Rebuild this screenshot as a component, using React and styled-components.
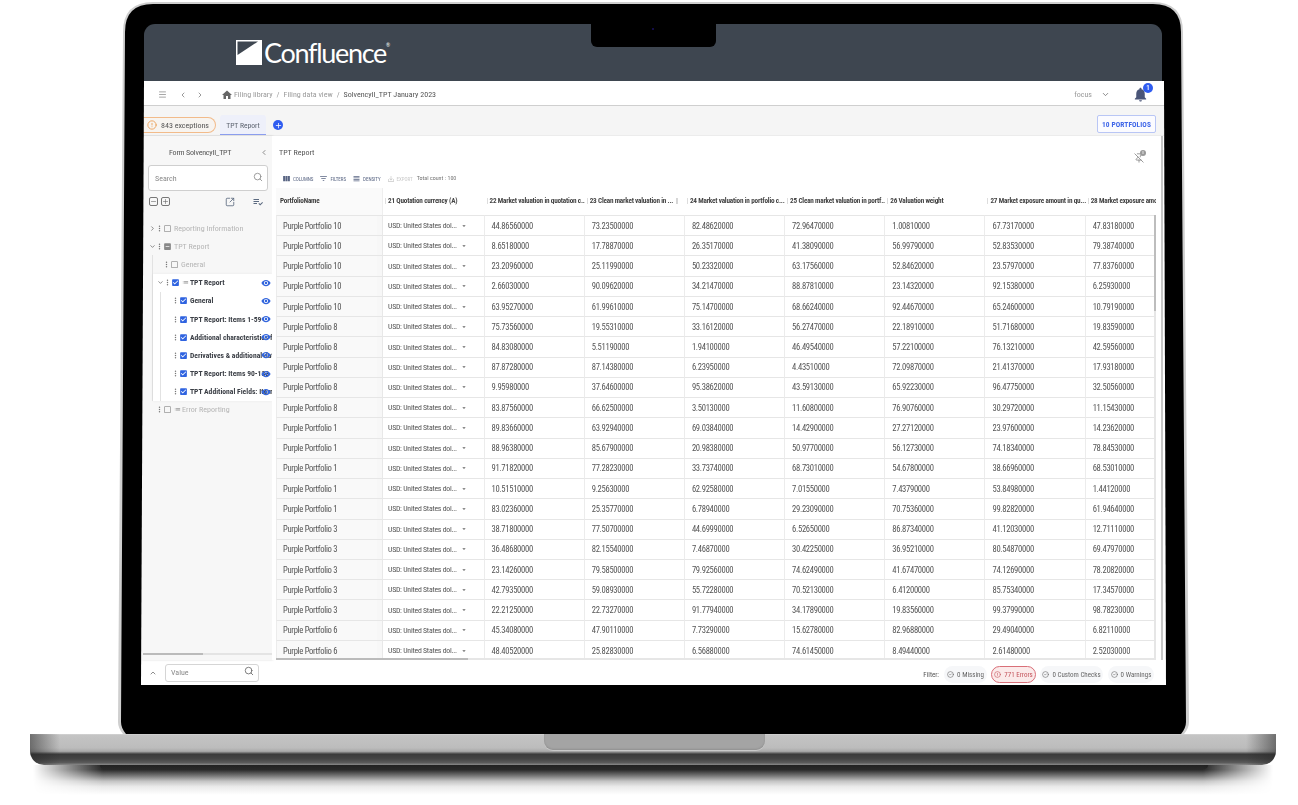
import React from "react";
import styled, { createGlobalStyle } from "styled-components";
import { ChevronLeft, ChevronRight, ChevronDown, ChevronUp, Menu, Search, SquareArrowOutUpRight, PinOff, CircleAlert, CircleCheck, Plus, Minus } from "lucide-react";
import { MdHome, MdNotifications, MdViewColumn, MdFilterList, MdViewHeadline, MdSaveAlt, MdVisibility, MdMoreVert, MdCheckBox, MdCheckBoxOutlineBlank, MdIndeterminateCheckBox, MdList, MdArrowDropDown, MdPlaylistAddCheck, MdAdd } from "react-icons/md";

const Global = createGlobalStyle`
  html, body { margin: 0; padding: 0; background: #fff; }
  body { font-family: Roboto, "Liberation Sans", sans-serif; overflow: hidden; }
  * { box-sizing: border-box; }
`;

const Stage = styled.div`
  width: 1298px; height: 805px; padding-top: 2px; background: #fff; overflow: hidden;
`;
const Lid = styled.div`
  position: relative; width: 1071px; height: 732px; margin-left: 118px; padding-top: 22px;
`;
const LidArt = styled.svg`
  position: absolute; inset: 0; width: 100%; height: 100%;
`;
const Header = styled.header`
  position: relative; height: 57px; margin-left: 26px; width: 1018px; padding-left: 92px;
  display: flex; align-items: center; gap: 2px;
  background: #3e4650; border-radius: 11px 11px 0 0;
`;
const Notch = styled.div`
  position: absolute; left: 447px; top: 0; width: 125px; height: 23px;
  background: #000; border-radius: 0 0 6px 6px;
`;
const Camera = styled.span`
  position: absolute; left: 61px; top: 4px; width: 2px; height: 2px; border-radius: 50%; background: #1a1060;
`;
const Brand = styled.span`
  font-family: Lato, "Open Sans", sans-serif; font-weight: 400; font-size: 27px; letter-spacing: -1.3px;
  line-height: 1; color: #fff;
`;
const BrandMark = styled.sup`
  font-size: 5px; vertical-align: 16px; line-height: 0; letter-spacing: 0;
`;
const AppFrame = styled.div`
  position: relative; margin-left: 23px; width: 1025px; height: 604px; background: #fff;
  display: flex; flex-direction: column;
  font-family: "Roboto Condensed", Roboto, sans-serif; font-stretch: 75%;
  clip-path: polygon(3px 0, 1023px 0, 100% 100%, 0 100%);
  filter: blur(0.3px);
`;
const TopBar = styled.div`
  height: 25px; flex: none; display: flex; align-items: center; padding: 3px 17px 0 16px;
  border-bottom: 1px solid #cfcfcf; color: #8a8a8a; font-size: 8px;
`;
const IconSlot = styled.span`
  display: inline-flex; align-items: center; justify-content: center; flex: none;
  width: ${p => p.$w || 12}px; margin-left: ${p => p.$ml || 0}px;
  color: ${p => p.$c || "inherit"};
`;
const Crumb = styled.span`
  margin-left: ${p => p.$ml || 0}px; white-space: nowrap; color: ${p => p.$dark ? "#555" : "#9a9a9a"};
`;
const Spacer = styled.div` flex: 1; `;
const BellWrap = styled.span`
  position: relative; display: inline-flex; margin-left: 22px; color: #4a5578;
`;
const BellBadge = styled.span`
  position: absolute; right: -4px; top: -3px; width: 10px; height: 10px; border-radius: 50%;
  background: #2f5cf0; color: #fff; font-size: 7px; font-weight: 500; display: flex; align-items: center; justify-content: center;
`;
const SubBar = styled.div`
  height: 29px; flex: none; display: flex; align-items: flex-end; background: #f5f5f5; padding-right: 10px;
`;
const ExceptionPill = styled.div`
  height: 16px; width: 76px; margin-bottom: 2px; margin-left: -1px; display: flex; align-items: center; gap: 4px; padding-left: 7px;
  border: 1px solid #f2bb8a; border-radius: 0 8px 8px 0; border-left: none; font-size: 8px; color: #555; background: #f7f4f0;
  white-space: nowrap;
  svg { color: #ea9a4e; flex: none; }
`;
const Tab = styled.div`
  width: 46px; height: 20px; margin-left: 4px; display: flex; align-items: center; justify-content: center; padding-top: 2px;
  font-size: 7.6px; color: #5d6470; background: #eef0fa; border-bottom: 1px solid #8d9ff0; border-radius: 3px 3px 0 0;
`;
const AddDot = styled.span`
  width: 10px; height: 10px; margin: 0 0 5px 7px; border-radius: 50%; background: #2f5cf0; color: #fff;
  display: flex; align-items: center; justify-content: center;
`;
const PortfolioButton = styled.button`
  width: 59px; height: 18px; margin-bottom: 2px; padding: 0; border: 1px solid #b9c6f5; border-radius: 2px; background: #fbfbff;
  color: #3f66e8; font-family: inherit; font-stretch: 75%; font-size: 7.4px; font-weight: 700; letter-spacing: 0.1px;
`;
const Body = styled.div`
  flex: 1; min-height: 0; display: flex; border-top: 1px solid #ececec;
`;
const Sidebar = styled.aside`
  position: relative; width: 131px; flex: none; background: #f7f7f7; padding: 8px 3px 0 7px; color: #555;
  box-shadow: 1px 0 2px rgba(0,0,0,.15);
  overflow: hidden;
`;
const SideTitle = styled.div`
  display: flex; align-items: center; height: 16px; padding-left: 21px; font-size: 8px; letter-spacing: -0.2px; color: #555; white-space: nowrap;
`;
const SearchBox = styled.div`
  height: 26px; margin-top: 5px; width: 120px; border: 1px solid #cfcfcf; border-radius: 3px; background: #fff;
  display: flex; align-items: center; justify-content: space-between; padding: 0 4px 0 6px; font-size: 8px; color: #8a8a8a;
  svg { margin-top: -2px; }
`;
const SideTools = styled.div`
  height: 13px; margin-top: 4px; display: flex; align-items: center; color: #666;
`;
const BoxBtn = styled.span`
  display: inline-flex; width: 9px; height: 9px; margin-left: ${p => p.$ml || 1}px; border: 1px solid #777; border-radius: 2px; align-items: center; justify-content: center;
`;
const Tree = styled.div`
  position: relative; margin: 11px -3px 0 -7px;
`;
const LevelOne = styled.div`
  margin-left: 11px; border-left: 1px solid #e2e2e2;
`;
const TreeBand = styled.div`
  background: #fff; box-shadow: 0 0 3px rgba(0,0,0,.06);
`;
const ChildGroup = styled.div`
  margin-left: 7px; border-left: 1px solid #e2e2e2;
`;
const TreeRow = styled.div`
  position: relative; height: 18.2px; display: flex; align-items: center; padding-left: ${p => p.$pad}px;
  font-size: ${p => p.$strong ? 7.6 : 8}px; white-space: nowrap; overflow: hidden;
  font-weight: ${p => p.$strong ? 700 : 400};
  color: ${p => p.$strong ? "#3b3f46" : "#b5b5b5"};
`;
const Twist = styled.span`
  display: inline-flex; width: 8px; justify-content: center; color: #444; flex: none;
`;
const BoxOn = styled(MdCheckBox)` color: #2f63e0; flex: none; margin-right: 2px; `;
const BoxOff = styled(MdCheckBoxOutlineBlank)` color: #999; flex: none; margin-right: 2px; `;
const BoxMixed = styled(MdIndeterminateCheckBox)` color: #888; flex: none; margin-right: 2px; `;
const Dots = styled(MdMoreVert)` color: #777; flex: none; margin: 0 -1px; `;
const ListGlyph = styled(MdList)` color: #999; flex: none; margin-right: 1px; `;
const Eye = styled(MdVisibility)`
  position: absolute; left: ${p => p.$left}px; color: #3366dd;
`;
const SideScroll = styled.div`
  position: absolute; left: 2px; right: 0; bottom: 5px; height: 2px; background: #e4e4e4;
  &::before { content: ""; display: block; width: 60px; height: 2px; background: #bbb; }
`;
const Main = styled.main`
  flex: 1; min-width: 0; position: relative; padding-left: 4px; background: #fff; overflow: hidden;
  margin-right: 3px; border-right: 2px solid #c6c6c6;
`;
const MainHead = styled.div`
  height: 33px; display: flex; align-items: center; justify-content: space-between; padding: 0 17px 0 3px; font-size: 8px; color: #555;
`;
const PinWrap = styled.span`
  position: relative; display: inline-flex; color: #888; margin-top: 10px;
`;
const PinBadge = styled.span`
  position: absolute; right: -2px; top: -3px; width: 6px; height: 6px; border-radius: 50%; background: #999; color: #eee; font-size: 4px; display: flex; align-items: center; justify-content: center;
`;
const Toolbar = styled.div`
  height: 19px; display: flex; align-items: center; padding-left: 6px; font-size: 5px; color: #596583; white-space: nowrap;
`;
const ToolItem = styled.span`
  display: inline-flex; align-items: center; gap: 2px; margin-right: 6px; color: ${p => p.$off ? "#c9c9c9" : "#596583"};
`;
const TotalCount = styled.span`
  font-size: 6px; color: #777; margin: -2px 0 0 -2px;
`;
const Grid = styled.div`
  display: grid; grid-template-columns: 101px 6px 101.5px repeat(7, 100.2px); width: max-content;
`;
const TableWrap = styled.div`
  position: relative; width: 880px; overflow: hidden;
`;
const HeadName = styled.div`
  height: 27px; display: flex; align-items: center; padding: 0 0 2px 4px; font-size: 7.2px; letter-spacing: -0.2px; font-weight: 700; color: #444; background: #fafafa;
  white-space: nowrap; overflow: hidden;
`;
const HeadCell = styled.div`
  position: relative; height: 27px; display: flex; align-items: center; padding: 0 3px 2px 5px; font-size: 7.2px; letter-spacing: -0.2px; font-weight: 700; color: #444;
  white-space: nowrap; overflow: hidden;
  &::before { content: ""; position: absolute; left: 2px; top: 10px; height: 6px; width: 1px; background: #ddd; }
`;
const HeadMenu = styled(MdMoreVert)` color: #888; flex: none; margin: 0 4px 0 auto; `;
const NameCell = styled.div`
  height: 20.24px; display: flex; align-items: center; padding-left: 6px; font-size: 8.6px; letter-spacing: -0.3px; color: #555; background: #f9f9f9;
  border-top: 1px solid #e6e6e6; border-left: 1px solid #ececec; white-space: nowrap;
`;
const GapCell = styled.div`
  height: 20.24px; background: #f7f7f7; border-top: 1px solid #e6e6e6; border-right: 1px solid #e8e8e8;
`;
const GapHead = styled.div` background: #fafafa; border-right: 1px solid #eee; `;
const Cell = styled.div`
  height: 20.24px; display: flex; align-items: center; padding-left: 7px; font-size: 8.6px; letter-spacing: -0.3px; color: #555;
  border-top: 1px solid #e6e6e6; border-right: 1px solid #ececec; white-space: nowrap;
`;
const CurrencyCell = styled(Cell)`
  padding-left: 5px; font-size: 7.8px; letter-spacing: -0.25px;
`;
const CurrencyText = styled.span` width: 72px; flex: none; `;
const Caret = styled(MdArrowDropDown)` color: #666; flex: none; `;
const VScroll = styled.div`
  position: absolute; right: 0; top: 27px; bottom: 0; width: 2px; background: #e6e6e6;
  &::before { content: ""; display: block; height: 96px; width: 2px; background: #bdbdbd; }
`;
const HScroll = styled.div`
  position: absolute; left: 0; right: 0; bottom: 0; height: 2px; background: #e6e6e6;
  &::before { content: ""; display: block; width: 192px; height: 2px; background: #bbb; }
`;
const BottomBar = styled.div`
  height: 25px; flex: none; display: flex; align-items: center; background: #fff; padding-left: 8px; padding-right: 12px;
`;
const ValueBox = styled.div`
  width: 94px; height: 18px; margin-left: 8px; border: 1px solid #d5d5d5; border-radius: 3px; display: flex; align-items: center; justify-content: space-between;
  padding: 0 4px 0 5px; font-size: 8px; color: #8a8a8a;
  svg { color: #666; margin-top: -3px; }
`;
const FilterLabel = styled.span` font-size: 7px; color: #555; margin: 4px 5px 0 0; `;
const Chip = styled.span`
  height: 17px; width: ${p => p.$w}px; margin: 4px 0 0 ${p => p.$ml ?? 4}px; display: inline-flex; align-items: center; justify-content: center; gap: 3px;
  border-radius: 9px; font-size: 7px; white-space: nowrap;
  background: ${p => p.$error ? "#fbeaea" : "#f6f7f9"};
  color: ${p => p.$error ? "#c4545c" : "#666"};
  border: 1px solid ${p => p.$error ? "#d96f78" : "transparent"};
`;
const Base = styled.div`
  position: relative; width: 1246px; height: 31px; margin-left: 30px;
  border-radius: 0 0 14px 14px;
  background:
    linear-gradient(90deg, rgba(40,40,40,.55) 0, rgba(60,60,60,0) 30px, rgba(60,60,60,0) calc(100% - 30px), rgba(40,40,40,.55) 100%),
    linear-gradient(180deg, #d6d6d6 0, #c4c4c4 4%, #bcbcbc 45%, #a8a8a8 56%, #3a3a3a 65%, #444 80%, #5a5a5a 92%, #8a8a8a 100%);
`;
const BaseNotch = styled.div`
  position: absolute; left: 514px; top: 0; width: 221px; height: 16px;
  border-radius: 0 0 9px 9px; background: #a4a4a4; box-shadow: 0 1px 0 #c9c9c9, inset 0 -1px 2px rgba(0,0,0,.12);
`;
const Foot = styled.div`
  position: absolute; bottom: -4px; left: ${p => p.$left}px; width: 78px; height: 4px; background: #111; border-radius: 0 0 4px 4px;
`;
const Shade = styled.div`
  width: 1240px; height: 30px; margin-left: 33px;
  background: linear-gradient(180deg, #222 0, #2a2a2a 16%, #777 36%, #c4c4c4 54%, #eaeaea 72%, #fff 100%);
  -webkit-mask-image: linear-gradient(90deg, transparent 0, #000 70px, #000 calc(100% - 70px), transparent 100%);
  mask-image: linear-gradient(90deg, transparent 0, #000 70px, #000 calc(100% - 70px), transparent 100%);
`;

const columns = [
  "21 Quotation currency (A)",
  "22 Market valuation in quotation c...",
  "23 Clean market valuation in ...",
  "24 Market valuation in portfolio c...",
  "25 Clean market valuation in portf...",
  "26 Valuation weight",
  "27 Market exposure amount in qu...",
  "28 Market exposure amo",
];
const rows = [
  [10,"44.86560000","73.23500000","82.48620000","72.96470000","1.00810000","67.73170000","47.83180000"],
  [10,"8.65180000","17.78870000","26.35170000","41.38090000","56.99790000","52.83530000","79.38740000"],
  [10,"23.20960000","25.11990000","50.23320000","63.17560000","52.84620000","23.57970000","77.83760000"],
  [10,"2.66030000","90.09620000","34.21470000","88.87810000","23.14320000","92.15380000","6.25930000"],
  [10,"63.95270000","61.99610000","75.14700000","68.66240000","92.44670000","65.24600000","10.79190000"],
  [8,"75.73560000","19.55310000","33.16120000","56.27470000","22.18910000","51.71680000","19.83590000"],
  [8,"84.83080000","5.51190000","1.94100000","46.49540000","57.22100000","76.13210000","42.59560000"],
  [8,"87.87280000","87.14380000","6.23950000","4.43510000","72.09870000","21.41370000","17.93180000"],
  [8,"9.95980000","37.64600000","95.38620000","43.59130000","65.92230000","96.47750000","32.50560000"],
  [8,"83.87560000","66.62500000","3.50130000","11.60800000","76.90760000","30.29720000","11.15430000"],
  [1,"89.83660000","63.92940000","69.03840000","14.42900000","27.27120000","23.97600000","14.23620000"],
  [1,"88.96380000","85.67900000","20.98380000","50.97700000","56.12730000","74.18340000","78.84530000"],
  [1,"91.71820000","77.28230000","33.73740000","68.73010000","54.67800000","38.66960000","68.53010000"],
  [1,"10.51510000","9.25630000","62.92580000","7.01550000","7.43790000","53.84980000","1.44120000"],
  [1,"83.02360000","25.35770000","6.78940000","29.23090000","70.75360000","99.82820000","61.94640000"],
  [3,"38.71800000","77.50700000","44.69990000","6.52650000","86.87340000","41.12030000","12.71110000"],
  [3,"36.48680000","82.15540000","7.46870000","30.42250000","36.95210000","80.54870000","69.47970000"],
  [3,"23.14260000","79.58500000","79.92560000","74.62490000","41.67470000","74.12690000","78.20820000"],
  [3,"42.79350000","59.08930000","55.72280000","70.52130000","6.41200000","85.75340000","17.34570000"],
  [3,"22.21250000","22.73270000","91.77940000","34.17890000","19.83560000","99.37990000","98.78230000"],
  [6,"45.34080000","47.90110000","7.73290000","15.62780000","82.96880000","29.49040000","6.82110000"],
  [6,"48.40520000","25.82830000","6.56880000","74.61450000","8.49440000","2.61480000","2.52030000"],
];
const children = ["General","TPT Report: Items 1-59","Additional characteristics for","Derivatives & additional data","TPT Report: Items 90-133","TPT Additional Fields: Items"];

function TableHead() {
  return (
    <>
      <HeadName>PortfolioName</HeadName>
      <GapHead />
      {columns.map((c, i) => (
        <HeadCell key={c}>
          <span>{c}</span>
          {i === 2 && <HeadMenu size={8} />}
        </HeadCell>
      ))}
    </>
  );
}

function TableRow({ row }) {
  const [n, ...vals] = row;
  return (
    <>
      <NameCell>Purple Portfolio {n}</NameCell>
      <GapCell />
      <CurrencyCell>
        <CurrencyText>USD: United States dol...</CurrencyText>
        <Caret size={8} />
      </CurrencyCell>
      {vals.map((v, i) => <Cell key={i}>{v}</Cell>)}
    </>
  );
}

function LaptopLid() {
  return (
    <LidArt viewBox="0 0 1071 732" preserveAspectRatio="none">
      <path d="M35 0H1035Q1065 0 1065 30L1071 720Q1071 726 1066 732H5Q0 726 0 720L5 30Q5 0 35 0Z" fill="#cfcfcf" />
      <path d="M35 2H1035Q1063 2 1063 30L1068 720Q1068 726 1063 732H8Q3 726 3 720L7 30Q7 2 35 2Z" fill="#000" />
    </LidArt>
  );
}

export default function App() {
  return (
    <Stage>
      <Global />
      <Lid>
        <LaptopLid />
        <Header>
          <svg width="26" height="25" viewBox="0 0 26 25">
            <path d="M0 0H26V25H0Z M1.5 1.5V15L22 1.5Z" fill="#fff" fillRule="evenodd" />
          </svg>
          <Brand>Confluence<BrandMark>®</BrandMark></Brand>
          <Notch><Camera /></Notch>
        </Header>
        <AppFrame>
          <TopBar>
            <IconSlot $w={10}><Menu size={9} /></IconSlot>
            <IconSlot $w={8} $ml={12} $c="#666"><ChevronLeft size={10} /></IconSlot>
            <IconSlot $w={8} $ml={9} $c="#666"><ChevronRight size={10} /></IconSlot>
            <IconSlot $w={12} $ml={17} $c="#666"><MdHome size={12} /></IconSlot>
            <Crumb $ml={1}>Filing library</Crumb>
            <Crumb $ml={4}>/</Crumb>
            <Crumb $ml={4}>Filing data view</Crumb>
            <Crumb $ml={4}>/</Crumb>
            <Crumb $ml={4} $dark>SolvencyII_TPT January 2023</Crumb>
            <Spacer />
            <Crumb>focus</Crumb>
            <IconSlot $w={10} $ml={8} $c="#666"><ChevronDown size={9} /></IconSlot>
            <BellWrap><MdNotifications size={17} /><BellBadge>1</BellBadge></BellWrap>
          </TopBar>
          <SubBar>
            <ExceptionPill><CircleAlert size={10} />843 exceptions</ExceptionPill>
            <Tab>TPT Report</Tab>
            <AddDot><MdAdd size={9} /></AddDot>
            <Spacer />
            <PortfolioButton>10 PORTFOLIOS</PortfolioButton>
          </SubBar>
          <Body>
            <Sidebar>
              <SideTitle>Form SolvencyII_TPT<IconSlot $w={8} $ml={29} $c="#555"><ChevronLeft size={9} /></IconSlot></SideTitle>
              <SearchBox>Search<Search size={10} /></SearchBox>
              <SideTools>
                <BoxBtn $ml={0}><Minus size={7} /></BoxBtn>
                <BoxBtn $ml={3}><Plus size={7} /></BoxBtn>
                <IconSlot $w={11} $ml={54} $c="#5b6a80"><SquareArrowOutUpRight size={10} /></IconSlot>
                <IconSlot $w={12} $ml={17} $c="#5b6a80"><MdPlaylistAddCheck size={12} /></IconSlot>
              </SideTools>
              <Tree>
                <TreeRow $pad={7}><Twist><ChevronRight size={7} /></Twist><Dots size={9} /><BoxOff size={9} />Reporting Information</TreeRow>
                <TreeRow $pad={7}><Twist><ChevronDown size={7} /></Twist><Dots size={9} /><BoxMixed size={9} />TPT Report</TreeRow>
                <LevelOne>
                  <TreeRow $pad={10}><Dots size={9} /><BoxOff size={9} />General</TreeRow>
                  <TreeBand>
                    <TreeRow $pad={3} $strong><Twist><ChevronDown size={7} /></Twist><Dots size={9} /><BoxOn size={9} /><ListGlyph size={7} />TPT Report<Eye size={10} $left={108} /></TreeRow>
                    <ChildGroup>
                      {children.map(c => (
                        <TreeRow key={c} $pad={11} $strong><Dots size={9} /><BoxOn size={9} />{c}<Eye size={10} $left={100} /></TreeRow>
                      ))}
                    </ChildGroup>
                  </TreeBand>
                </LevelOne>
                <TreeRow $pad={15}><Dots size={9} /><BoxOff size={9} /><ListGlyph size={7} />Error Reporting</TreeRow>
              </Tree>
              <SideScroll />
            </Sidebar>
            <Main>
              <MainHead>
                <span>TPT Report</span>
                <PinWrap><PinOff size={10} /><PinBadge>0</PinBadge></PinWrap>
              </MainHead>
              <Toolbar>
                <ToolItem><MdViewColumn size={9} />COLUMNS</ToolItem>
                <ToolItem><MdFilterList size={9} />FILTERS</ToolItem>
                <ToolItem><MdViewHeadline size={9} />DENSITY</ToolItem>
                <ToolItem $off><MdSaveAlt size={8} />EXPORT</ToolItem>
                <TotalCount>Total count : 100</TotalCount>
              </Toolbar>
              <TableWrap>
                <Grid>
                  <TableHead />
                  {rows.map((r, i) => <TableRow key={i} row={r} />)}
                </Grid>
                <VScroll />
                <HScroll />
              </TableWrap>
            </Main>
          </Body>
          <BottomBar>
            <IconSlot $w={8} $c="#555"><ChevronUp size={8} /></IconSlot>
            <ValueBox>Value<Search size={10} /></ValueBox>
            <Spacer />
            <FilterLabel>Filter:</FilterLabel>
            <Chip $w={43} $ml={0}><CircleCheck size={7} />0 Missing</Chip>
            <Chip $w={45} $error><CircleAlert size={7} />771 Errors</Chip>
            <Chip $w={63}><CircleCheck size={7} />0 Custom Checks</Chip>
            <Chip $w={46} $ml={5}><CircleCheck size={7} />0 Warnings</Chip>
          </BottomBar>
        </AppFrame>
      </Lid>
      <Base>
        <BaseNotch />
        <Foot $left={70} />
        <Foot $left={1100} />
      </Base>
      <Shade />
    </Stage>
  );
}
